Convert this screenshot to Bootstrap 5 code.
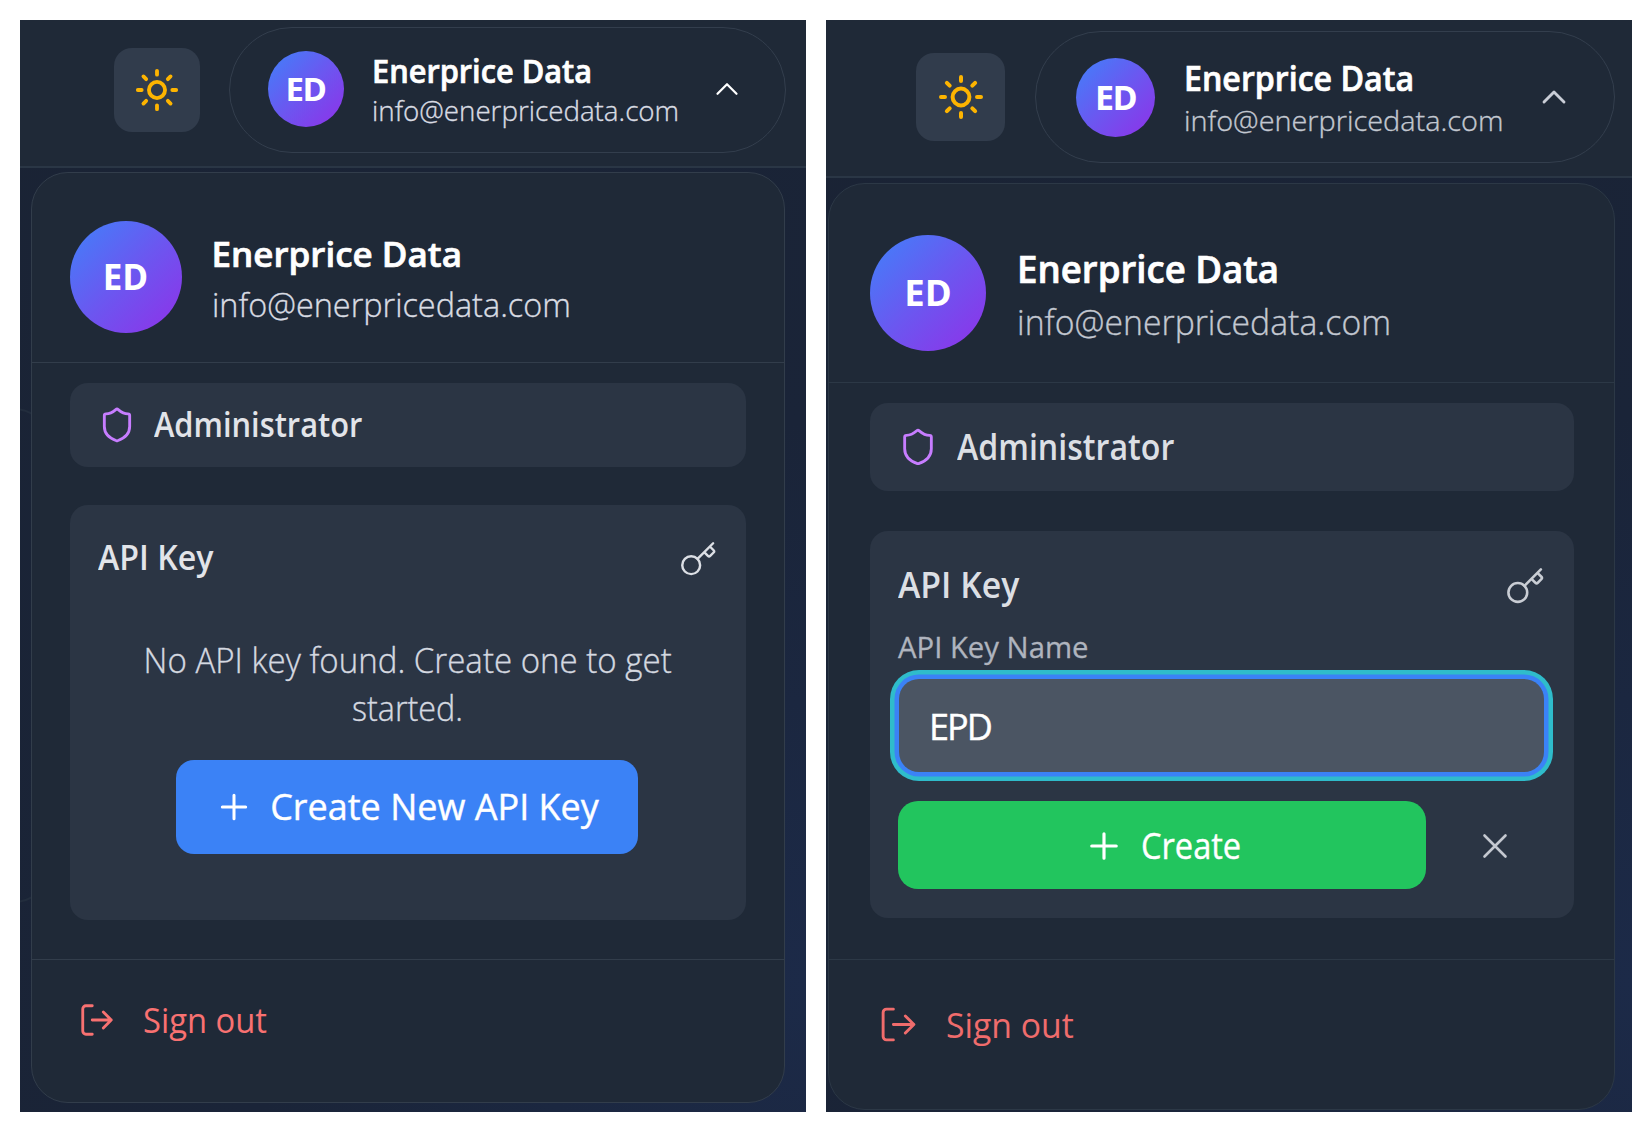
<!DOCTYPE html>
<html lang="en" data-bs-theme="dark">
<head>
<meta charset="utf-8">
<meta name="viewport" content="width=device-width, initial-scale=1">
<title>Account menu</title>
<link href="https://cdn.jsdelivr.net/npm/bootstrap@5.3.0/dist/css/bootstrap.min.css" rel="stylesheet">
<style>
body{background:#fff;font-family:"Open Sans","Noto Sans",sans-serif;width:1652px;height:1132px;overflow:hidden;color:#fff}
svg{fill:none;stroke:currentColor;stroke-linecap:round;stroke-linejoin:round;flex:none;display:block}
.stage{padding:20px;gap:20px}
.shot{width:786px;height:1092px;overflow:hidden;position:relative;background:radial-gradient(circle at 100% 88%,#1c2a48 0,#1a2438 45%,#1a2334 100%)}
.shot.b-shot{width:806px}
.fit{display:inline-block;white-space:nowrap;transform-origin:0 50%;transform:scaleX(var(--sx,1))}
.fit.mid{transform-origin:50% 50%}
.topbar{background:#1f2937;border-bottom:2px solid #2a3645}
.sun-btn{background:#313c4c;color:#fdb400;border:0;border-radius:18px;padding:0}
.pill{border:1.5px solid #333e4d;border-radius:66px;color:#fff}
.avatar{border-radius:50%;background:linear-gradient(135deg,#3f82fa 0%,#6b57f0 50%,#9030e8 100%);font-weight:700;flex:none}
.uname{font-weight:600;-webkit-text-stroke:.7px #fff}
.umail{font-weight:300;color:#d9dce3;-webkit-text-stroke:.35px #d9dce3}
.menu{background:#1f2937;border:1.5px solid #323d4b;border-radius:37px;position:relative}
.rule-b{border-bottom:1.5px solid #323d4b}
.rule-t{border-top:1.5px solid #323d4b}
.tile{background:#2b3544;border-radius:18px}
.role{font-weight:600;color:#e2e4e9}
.shield{color:#c77dff}
.keyico{color:#dcdfe5}
.note{font-weight:300;color:#d5d9e0;-webkit-text-stroke:.35px #d5d9e0}
.btn-new,.btn-new:hover{background:#3b82f6;color:#fff;border:0;border-radius:18px;padding:0;font-weight:500;-webkit-text-stroke:.4px #fff}
.btn-make,.btn-make:hover{background:#22c55e;color:#fff;border:0;border-radius:20px;padding:0;font-weight:500;-webkit-text-stroke:.4px #fff}
.key-label{font-weight:400;color:#afb4be;-webkit-text-stroke:.3px #afb4be}
.key-input,.key-input:focus{background:#4b5563;color:#fff;border:0;border-radius:20px;box-shadow:0 0 0 4.5px #3b82f6,0 0 0 9px #2fbccb}
.signout{color:#f87171;font-weight:400}

/* first panel */
.a-shot::before{content:"";position:absolute;left:-200px;top:388px;width:230px;height:495px;border:2px solid #222d3d;border-radius:36px}
.a-shot .topbar{height:148px;padding-left:94px}
.a-shot .sun-btn{width:86px;height:84px;margin-top:28px}
.a-shot .pill{width:557px;height:126px;margin:7px 0 0 28.5px;padding:0 47px 2px 38px}
.a-shot .pill svg{margin-right:-8px}
.a-shot .pill .avatar{width:76px;height:76px;font-size:33px;letter-spacing:-1.5px}
.a-shot .pill .who{margin:3px 0 0 28px}
.a-shot .pill .uname{font-size:33px;line-height:40px;--sx:.932}
.a-shot .pill .umail{font-size:27px;line-height:40px;--sx:1.027}
.a-shot .menu{width:754px;height:931px;margin:4px 0 0 10.5px}
.a-shot .profile{height:189.5px;padding:19px 0 0 38px}
.a-shot .profile .avatar{width:112px;height:112px;font-size:35px}
.a-shot .profile .who{margin:5px 0 0 30px}
.a-shot .profile .uname{font-size:35px;line-height:50px}
.a-shot .profile .umail{font-size:33px;line-height:51px;--sx:.982}
.a-shot .body-area{height:596.5px;padding:20.5px 38px 0}
.a-shot .admin{height:84px;padding-left:28px;margin-bottom:38px}
.a-shot .role{font-size:34px;line-height:46px}
.a-shot .admin .role{--sx:.906;margin:-3px 0 0 18px}
.a-shot .api{height:415px;padding:29px 28px 0 28px}
.a-shot .api .role{--sx:.945}
.a-shot .api .keyico{margin:2px 0 -2px}
.a-shot .note{font-size:34px;line-height:48px;margin-top:56px}
.a-shot .note .l1{--sx:.972}
.a-shot .note .l2{--sx:.95}
.a-shot .btn-new{width:462px;height:94px;margin:28px 0 0 78px;font-size:36px;line-height:48px}
.a-shot .signout{font-size:34px;padding:0 0 21px 46px;height:141px}
.a-shot .signout .fit{--sx:.963;margin-left:27px;padding-top:2px}

/* second panel */
.b-shot .topbar{height:158px;padding-left:90px}
.b-shot .sun-btn{width:89px;height:88px;margin-top:33px}
.b-shot .pill{width:580px;height:132px;margin:11px 0 0 30px;padding:0 40px 0 40px}
.b-shot .pill .avatar{width:79px;height:79px;font-size:34px;letter-spacing:-1.5px}
.b-shot .pill .who{margin:3px 0 0 29px}
.b-shot .pill .uname{font-size:34.5px;line-height:42px;--sx:.932}
.b-shot .pill .umail{font-size:28px;line-height:42px;--sx:1.03}
.b-shot .pill svg{color:#c9cdd6}
.b-shot .menu{width:787px;height:927px;margin:5px 0 0 2px;border-color:#2c3846}
.b-shot .rule-b,.b-shot .rule-t{border-color:#2c3846}
.b-shot .profile{height:199px;padding:19px 0 0 41px}
.b-shot .profile .avatar{width:116px;height:116px;font-size:36.5px}
.b-shot .profile .who{margin:5px 0 0 31px}
.b-shot .profile .uname{font-size:37px;line-height:53px;--sx:.99}
.b-shot .profile .umail{font-size:35px;line-height:53px;--sx:.965}
.b-shot .umail{color:#c3c8d1;-webkit-text-stroke-color:#c3c8d1}
.b-shot .body-area{height:576px;padding:20px 40px 0 41px}
.b-shot .admin{height:88px;padding-left:28px;margin-bottom:40px}
.b-shot .role{font-size:35.5px;line-height:48px;color:#dcdfe4}
.b-shot .admin .role{--sx:.905;margin:-2px 0 0 19px}
.b-shot .api{height:387px;padding:29px 28px 0 28px}
.b-shot .api .role{--sx:.952}
.b-shot .keyico{color:#c9cdd4}
.b-shot .api .keyico{margin:2px 0 -2px}
.b-shot .key-label{font-size:29px;line-height:36px;margin-top:21px}
.b-shot .key-label .fit{--sx:1.01}
.b-shot .key-input{width:645px;height:93px;font-size:36px;padding:1px 0 0 30px;letter-spacing:-2px;margin:14px 0 0 1px;-webkit-text-stroke:.4px #fff}
.b-shot .btn-make{width:528px;height:88px;font-size:36px;line-height:48px;padding:2px 0 0 11px}
.b-shot .acts{margin-top:29px}
.b-shot .btn-make .fit{--sx:.905}
.b-shot .x-btn{margin:2px 0 0 48px;color:#c4c8d0}
.b-shot .signout{font-size:35.5px;padding:0 0 19px 49px;height:149px;color:#ef6c6c}
.b-shot .signout .fit{--sx:.95;margin-left:27px}
</style>
</head>
<body>
<main class="stage d-flex">

<section class="shot a-shot">
  <header class="topbar d-flex align-items-start">
    <button class="sun-btn d-flex align-items-center justify-content-center" aria-label="Theme">
      <svg width="46" height="46" viewBox="0 0 24 24" stroke-width="2"><circle cx="12" cy="12" r="4.2"/><path d="M12 2v2M12 20v2M4.93 4.93l1.41 1.41M17.66 17.66l1.41 1.41M2 12h2M20 12h2M6.34 17.66l-1.41 1.41M19.07 4.93l-1.41 1.41"/></svg>
    </button>
    <div class="pill d-flex align-items-center">
      <div class="avatar d-flex align-items-center justify-content-center">ED</div>
      <div class="who d-flex flex-column align-items-start">
        <span class="uname fit">Enerprice Data</span>
        <span class="umail fit">info@enerpricedata.com</span>
      </div>
      <svg class="ms-auto" width="38" height="38" viewBox="0 0 24 24" stroke-width="1.4"><path d="m18 15-6-6-6 6"/></svg>
    </div>
  </header>
  <div class="menu">
    <div class="profile rule-b d-flex align-items-center">
      <div class="avatar d-flex align-items-center justify-content-center">ED</div>
      <div class="who d-flex flex-column align-items-start">
        <span class="uname fit">Enerprice Data</span>
        <span class="umail fit">info@enerpricedata.com</span>
      </div>
    </div>
    <div class="body-area">
      <div class="tile admin d-flex align-items-center">
        <svg class="shield" width="38" height="38" viewBox="0 0 24 24" stroke-width="1.8"><path d="M20 13c0 5-3.5 7.5-7.66 8.95a1 1 0 0 1-.67-.01C7.5 20.5 4 18 4 13V6a1 1 0 0 1 1-1c2 0 4.5-1.2 6.24-2.72a1.17 1.17 0 0 1 1.52 0C14.51 3.81 17 5 19 5a1 1 0 0 1 1 1z"/></svg>
        <span class="role fit">Administrator</span>
      </div>
      <div class="tile api">
        <div class="d-flex align-items-center justify-content-between">
          <span class="role fit">API Key</span>
          <svg class="keyico" width="39" height="39" viewBox="0 0 24 24" stroke-width="1.5"><path d="m15.5 7.5 2.3 2.3a1 1 0 0 0 1.4 0l2.1-2.1a1 1 0 0 0 0-1.4L19 4M21 2l-9.6 9.6"/><circle cx="7.5" cy="15.5" r="5.5"/></svg>
        </div>
        <div class="note text-center"><span class="fit mid l1">No API key found. Create one to get</span><br><span class="fit mid l2">started.</span></div>
        <button class="btn btn-new d-flex align-items-center justify-content-center">
          <svg width="40" height="40" viewBox="0 0 24 24" stroke-width="1.8"><path d="M5 12h14M12 5v14"/></svg>
          <span class="fit ms-3">Create New API Key</span>
        </button>
      </div>
    </div>
    <div class="signout rule-t d-flex align-items-center">
      <svg width="38" height="38" viewBox="0 0 24 24" stroke-width="1.8"><path d="M9 21H5a2 2 0 0 1-2-2V5a2 2 0 0 1 2-2h4M16 17l5-5-5-5M21 12H9"/></svg>
      <span class="fit">Sign out</span>
    </div>
  </div>
</section>

<section class="shot b-shot">
  <header class="topbar d-flex align-items-start">
    <button class="sun-btn d-flex align-items-center justify-content-center" aria-label="Theme">
      <svg width="48" height="48" viewBox="0 0 24 24" stroke-width="2"><circle cx="12" cy="12" r="4.2"/><path d="M12 2v2M12 20v2M4.93 4.93l1.41 1.41M17.66 17.66l1.41 1.41M2 12h2M20 12h2M6.34 17.66l-1.41 1.41M19.07 4.93l-1.41 1.41"/></svg>
    </button>
    <div class="pill d-flex align-items-center">
      <div class="avatar d-flex align-items-center justify-content-center">ED</div>
      <div class="who d-flex flex-column align-items-start">
        <span class="uname fit">Enerprice Data</span>
        <span class="umail fit">info@enerpricedata.com</span>
      </div>
      <svg class="ms-auto" width="40" height="40" viewBox="0 0 24 24" stroke-width="1.7"><path d="m18 15-6-6-6 6"/></svg>
    </div>
  </header>
  <div class="menu">
    <div class="profile rule-b d-flex align-items-center">
      <div class="avatar d-flex align-items-center justify-content-center">ED</div>
      <div class="who d-flex flex-column align-items-start">
        <span class="uname fit">Enerprice Data</span>
        <span class="umail fit">info@enerpricedata.com</span>
      </div>
    </div>
    <div class="body-area">
      <div class="tile admin d-flex align-items-center">
        <svg class="shield" width="40" height="40" viewBox="0 0 24 24" stroke-width="1.7"><path d="M20 13c0 5-3.5 7.5-7.66 8.95a1 1 0 0 1-.67-.01C7.5 20.5 4 18 4 13V6a1 1 0 0 1 1-1c2 0 4.5-1.2 6.24-2.72a1.17 1.17 0 0 1 1.52 0C14.51 3.81 17 5 19 5a1 1 0 0 1 1 1z"/></svg>
        <span class="role fit">Administrator</span>
      </div>
      <div class="tile api">
        <div class="d-flex align-items-center justify-content-between">
          <span class="role fit">API Key</span>
          <svg class="keyico" width="41" height="41" viewBox="0 0 24 24" stroke-width="1.5"><path d="m15.5 7.5 2.3 2.3a1 1 0 0 0 1.4 0l2.1-2.1a1 1 0 0 0 0-1.4L19 4M21 2l-9.6 9.6"/><circle cx="7.5" cy="15.5" r="5.5"/></svg>
        </div>
        <label class="key-label d-block" for="keyName"><span class="fit">API Key Name</span></label>
        <input id="keyName" class="form-control key-input" value="EPD">
        <div class="acts d-flex align-items-center">
          <button class="btn btn-make d-flex align-items-center justify-content-center">
            <svg width="42" height="42" viewBox="0 0 24 24" stroke-width="1.8"><path d="M5 12h14M12 5v14"/></svg>
            <span class="fit ms-3">Create</span>
          </button>
          <svg class="x-btn" width="42" height="42" viewBox="0 0 24 24" stroke-width="1.5"><path d="M18 6 6 18M6 6l12 12"/></svg>
        </div>
      </div>
    </div>
    <div class="signout rule-t d-flex align-items-center">
      <svg width="41" height="41" viewBox="0 0 24 24" stroke-width="1.7"><path d="M9 21H5a2 2 0 0 1-2-2V5a2 2 0 0 1 2-2h4M16 17l5-5-5-5M21 12H9"/></svg>
      <span class="fit">Sign out</span>
    </div>
  </div>
</section>

</main>
<script src="https://cdn.jsdelivr.net/npm/bootstrap@5.3.0/dist/js/bootstrap.bundle.min.js"></script>
</body>
</html>
